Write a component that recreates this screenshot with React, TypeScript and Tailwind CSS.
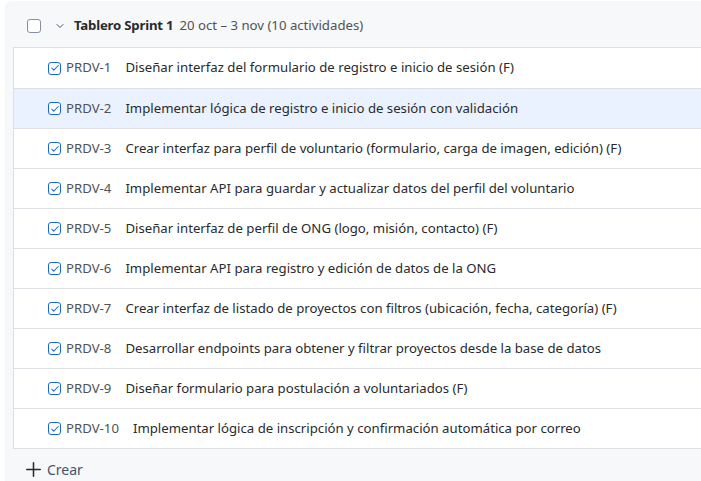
import { Check, ChevronDown, Plus } from 'lucide-react';

const items = [
  { id: 'PRDV-1', title: 'Diseñar interfaz del formulario de registro e inicio de sesión (F)' },
  { id: 'PRDV-2', title: 'Implementar lógica de registro e inicio de sesión con validación' },
  { id: 'PRDV-3', title: 'Crear interfaz para perfil de voluntario (formulario, carga de imagen, edición) (F)' },
  { id: 'PRDV-4', title: 'Implementar API para guardar y actualizar datos del perfil del voluntario' },
  { id: 'PRDV-5', title: 'Diseñar interfaz de perfil de ONG (logo, misión, contacto) (F)' },
  { id: 'PRDV-6', title: 'Implementar API para registro y edición de datos de la ONG' },
  { id: 'PRDV-7', title: 'Crear interfaz de listado de proyectos con filtros (ubicación, fecha, categoría) (F)' },
  { id: 'PRDV-8', title: 'Desarrollar endpoints para obtener y filtrar proyectos desde la base de datos' },
  { id: 'PRDV-9', title: 'Diseñar formulario para postulación a voluntariados (F)' },
  { id: 'PRDV-10', title: 'Implementar lógica de inscripción y confirmación automática por correo' },
];

export default function App() {
  return (
    <div className="w-[701px] h-[481px] overflow-hidden bg-white pl-[5px] pt-[1px] font-['Segoe_UI','Noto_Sans',sans-serif] text-[13.2px]">
      <div className="w-[740px] h-[500px] bg-[#f7f8f9] rounded-tl-md">
        {/* Sprint header */}
        <div className="h-[46px] flex items-center pl-[22px] pt-[3px]">
          <span className="w-[14px] h-[14px] rounded-[3px] border border-[#8590a2] bg-white" />
          <ChevronDown className="w-[12px] h-[12px] ml-[13px] text-[#44546f]" strokeWidth={2} />
          <span className="ml-[8px] font-bold text-[#292a2e] tracking-[-0.2px]">Tablero Sprint 1</span>
          <span className="ml-[6px] text-[#505258]">20 oct – 3 nov (10 actividades)</span>
        </div>

        {/* Issue list */}
        <div className="ml-[8px] bg-white border border-[#dcdfe4] border-r-0">
          {items.map((it, i) => (
            <div
              key={it.id}
              className={`h-[40px] flex items-center pl-[34px] ${i > 0 ? 'border-t border-[#dcdfe4]' : ''} ${i === 1 ? 'bg-[#e9f2fe]' : ''}`}
            >
              <span className="w-[13px] h-[13px] rounded-[3px] border border-[#1868db] bg-white flex items-center justify-center">
                <Check className="w-[10px] h-[10px] text-[#1868db]" strokeWidth={2.5} />
              </span>
              <span className="ml-[5px] text-[#505258]">{it.id}</span>
              <span className="ml-[14px] text-[#292a2e]">{it.title}</span>
            </div>
          ))}
        </div>

        {/* Create */}
        <div className="h-[40px] flex items-center pl-[17px] text-[#44546f]">
          <Plus className="w-[23px] h-[23px] text-[#292a2e]" strokeWidth={1.6} />
          <span className="ml-[2px] text-[14px]">Crear</span>
        </div>
      </div>
    </div>
  );
}
